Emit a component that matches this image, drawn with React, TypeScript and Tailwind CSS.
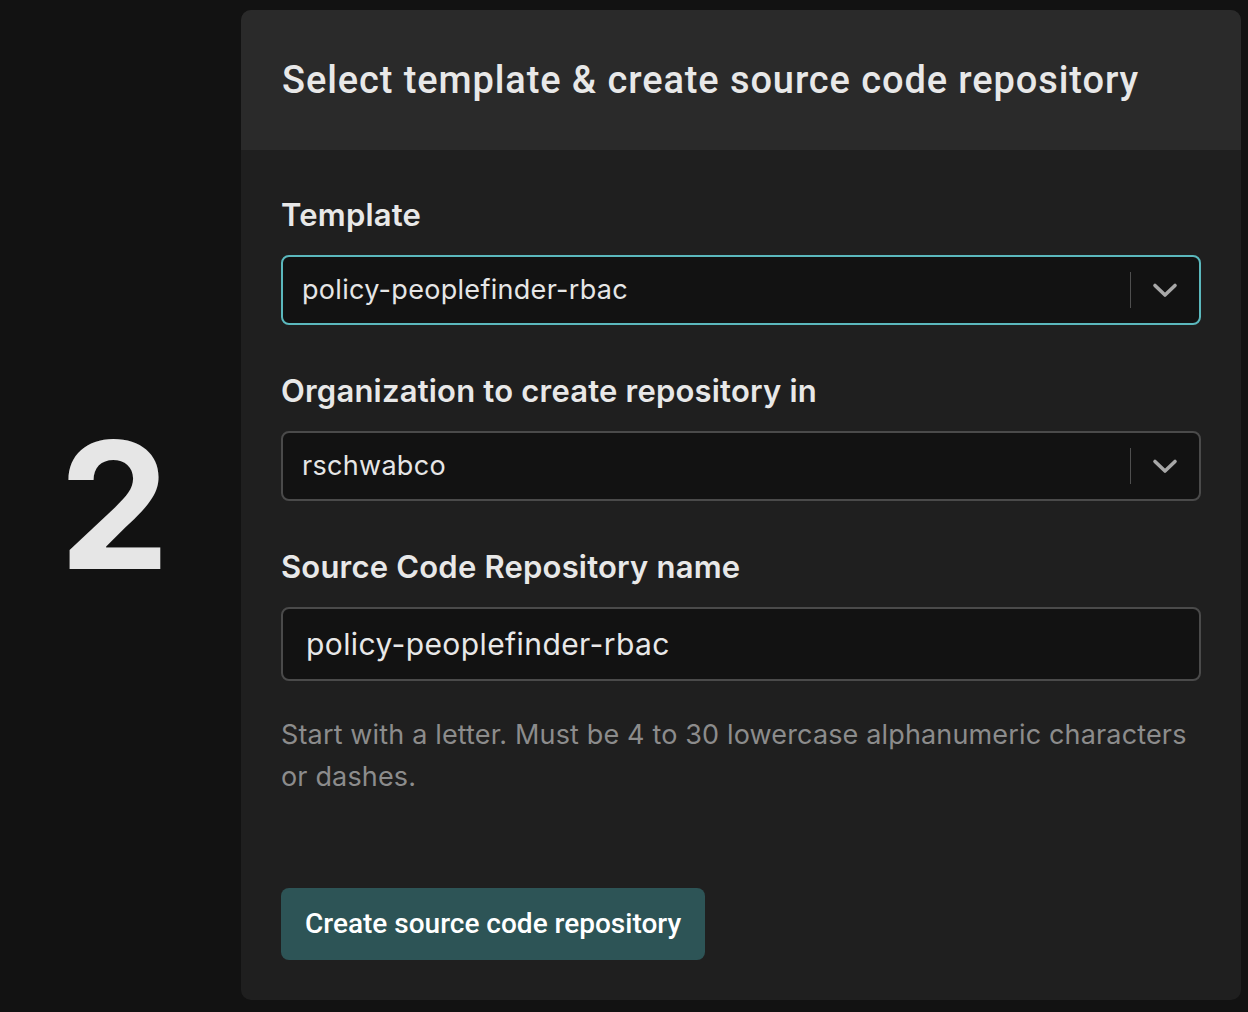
import React from "react";

function Chevron() {
  return (
    <svg width="26" height="16" viewBox="0 0 26 16" fill="none" stroke="#a8a8a8" strokeWidth="3.6" strokeLinecap="round" strokeLinejoin="round">
      <path d="M3 3.5l10 9.5 10-9.5" />
    </svg>
  );
}

function SelectBox({ value, focused }: { value: string; focused?: boolean }) {
  return (
    <div
      className={
        "flex h-[70px] items-center rounded-[8px] bg-[#121212] " +
        (focused ? "border-2 border-[#5bb8bd]" : "border-2 border-[#4a4a4a]")
      }
    >
      <div
        className="flex-1 pl-[19px] pt-[1px] text-[27px] tracking-[0.3px] text-[#e6e6e6]"
        style={{ fontFamily: "Inter, 'Noto Sans', sans-serif" }}
      >
        {value}
      </div>
      <div className="h-[36px] w-[1px] bg-[#4f4f4f]" />
      <div className="flex w-[68px] items-center justify-center">
        <Chevron />
      </div>
    </div>
  );
}

export default function App() {
  const inter = { fontFamily: "Inter, 'Noto Sans', sans-serif" };
  const roboto = { fontFamily: "Roboto, 'Noto Sans', sans-serif" };
  return (
    <div className="flex h-[1012px] w-[1248px] bg-[#121212] pt-[10px] pb-[12px] pr-[7px]">
      <div className="flex w-[241px] items-center justify-center pr-[12px]">
        <span className="text-[176px] font-bold leading-none text-[#e6e6e6]" style={inter}>
          2
        </span>
      </div>
      <div className="flex flex-1 flex-col overflow-hidden rounded-[10px] bg-[#1f1f1f]">
        <div className="flex h-[140px] items-center bg-[#2a2a2a] px-[41px]">
          <h1 className="text-[38px] font-medium tracking-[0.9px] text-[#e8e8e8]" style={roboto}>
            Select template &amp; create source code repository
          </h1>
        </div>
        <div className="flex flex-col px-[40px] pt-[45px]">
          <label className="text-[31px] font-semibold leading-[40px] tracking-[0.2px] text-[#e8e8e8]" style={inter}>
            Template
          </label>
          <div className="mt-[20px]">
            <SelectBox value="policy-peoplefinder-rbac" focused />
          </div>
          <label className="mt-[46px] text-[31px] font-semibold leading-[40px] tracking-[0.2px] text-[#e8e8e8]" style={inter}>
            Organization to create repository in
          </label>
          <div className="mt-[20px]">
            <SelectBox value="rschwabco" />
          </div>
          <label className="mt-[46px] text-[31px] font-semibold leading-[40px] tracking-[0.2px] text-[#e8e8e8]" style={inter}>
            Source Code Repository name
          </label>
          <div
            className="mt-[20px] flex h-[74px] items-center rounded-[8px] border-2 border-[#4a4a4a] bg-[#121212] pl-[23px] text-[30px] tracking-[0.4px] text-[#e8e8e8]"
            style={inter}
          >
            policy-peoplefinder-rbac
          </div>
          <p className="mt-[33px] text-[27px] leading-[42px] tracking-[0.15px] text-[#8c8c8c]" style={inter}>
            Start with a letter. Must be 4 to 30 lowercase alphanumeric characters or dashes.
          </p>
          <div className="mt-[90px]">
            <button className="h-[72px] rounded-[8px] bg-[#2d5456] px-[24px] text-[28px] font-medium text-white" style={roboto}>
              Create source code repository
            </button>
          </div>
        </div>
      </div>
    </div>
  );
}
